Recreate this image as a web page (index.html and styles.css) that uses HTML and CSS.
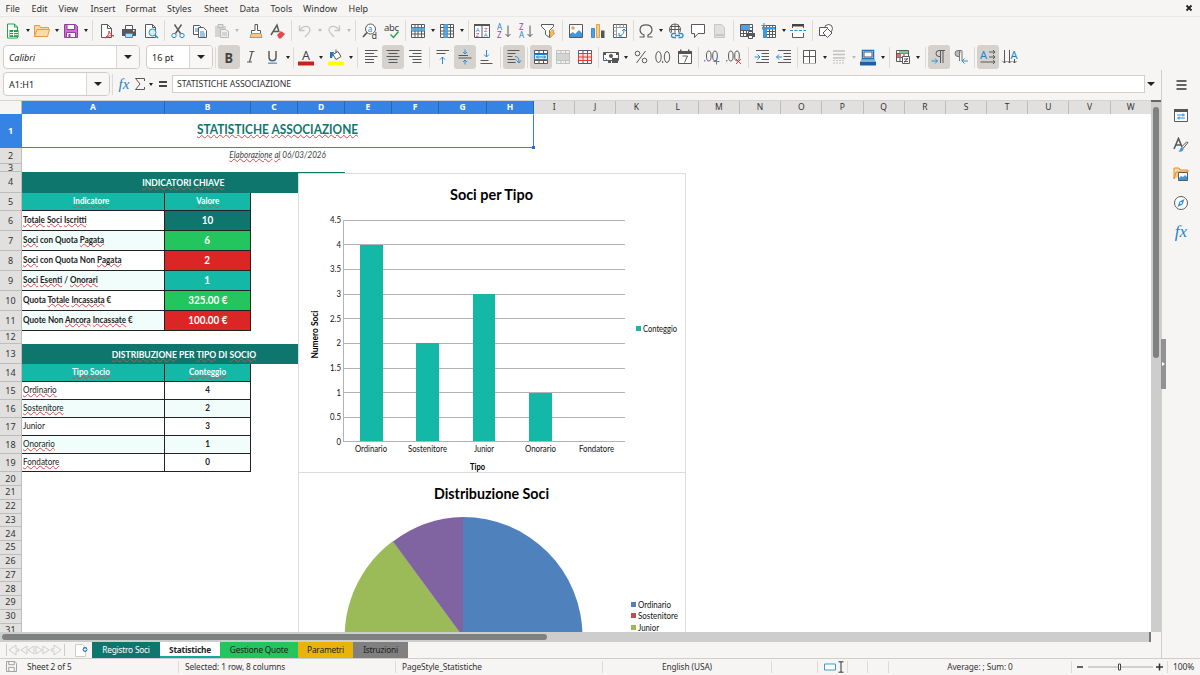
FILE: index.html
```html
<!DOCTYPE html>
<html lang="it">
<head>
    <meta charset="utf-8">
    <title>Statistiche Associazione</title>
    <link rel="stylesheet" href="styles.css">
</head>
<body>
<div class="app">
    <div class="menubar">
        <span class="m1">File</span><span class="m2">Edit</span><span class="m3">View</span><span class="m4">Insert</span><span class="m5">Format</span><span class="m6">Styles</span><span class="m7">Sheet</span><span class="m8">Data</span><span class="m9">Tools</span><span class="m10">Window</span><span class="m11">Help</span>
        <svg class="close" viewBox="0 0 8 8"><path d="M1.5 1.5l5 5M6.500 1.500l-5 5"/></svg>
    </div>

    <!-- standard toolbar -->
    <div class="toolbar standard">
        <span class="btn"><svg viewBox="0 0 16 16"><path class="green wf" d="M2.500 1h7l3 3v11h-10z"/><path class="green" d="M9.500 1v3h3"/><path fill="#27a04c" d="M4.500 7h9v7h-9z"/><path stroke="#fff" d="M5 9.500h8M5 11.700h8M8.500 7.500v6"/></svg></span><span class="dd"></span>
        <span class="btn"><svg viewBox="0 0 16 16"><path fill="#f9d9a5" stroke="#e79c3c" d="M.5 13.500V2.500h5l1 2h8v2"/><path fill="#fcdca6" stroke="#e79c3c" d="M.5 13.500l2.500-7h12.500l-2 7z"/></svg></span><span class="dd"></span>
        <span class="btn"><svg viewBox="0 0 16 16"><path fill="#cf6fd6" stroke="#8e3f9e" d="M1.500 1.500h11l2 2v11h-13z"/><path fill="#fff" stroke="#8e3f9e" d="M4 1.500h7.500v5H4zM3.500 9.500h9v5h-9z"/><path fill="#8e3f9e" d="M5.500 11h2v3h-2z"/></svg></span><span class="dd"></span>
        <span class="sep x"></span>
        <span class="btn"><svg viewBox="0 0 16 16"><path class="gray wf" d="M2.500 1.500h6l4 4v9h-10z"/><path class="gray" d="M8.500 1.500v4h4"/><path class="red" d="M6 15c3-2 4-4 4-7 1 3 2 4 5 5-3-1-6 0-9 2"/></svg></span>
        <span class="btn"><svg viewBox="0 0 16 16"><path fill="#fff" stroke="#555" d="M4.500 2.500h7v4h-7z"/><path fill="#54585c" d="M1 6h14v7H1z"/><path fill="#aee0fb" stroke="#2f8fd0" d="M4.500 10.500h7v4h-7z"/><path fill="#fff" d="M12 7h1.500v1.500H12z"/></svg></span>
        <span class="btn"><svg viewBox="0 0 16 16"><path class="gray wf" d="M2.500 1.500h7l3 3v10h-10z"/><path class="gray" d="M9.500 1.500v3h3"/><circle class="blue" cx="9.500" cy="9.500" r="3.500" fill="#d7edfb"/><path class="blue" stroke-width="1.500" d="M12 12l3 3"/></svg></span>
        <span class="sep"></span>
        <span class="btn"><svg viewBox="0 0 16 16"><path class="gray" stroke-width="1.400" d="M4.500 1.500l6 9M11.500 1.500l-6 9"/><circle class="blue" cx="4" cy="12.500" r="2.200"/><circle class="blue" cx="12" cy="12.500" r="2.200"/></svg></span>
        <span class="btn"><svg viewBox="0 0 16 16"><path class="gray wf" d="M1.500 2.500h6l2 2v7h-8z"/><path class="blue" d="M3 6h5M3 8h5"/><path class="gray wf" d="M6.500 4.500h5l3 3v7h-8z"/><path class="blue" d="M8 9h4M8 11h5M8 13h5"/></svg></span>
        <span class="btn off"><svg viewBox="0 0 16 16"><path fill="#ccc" d="M1 3h11v11H1z"/><path stroke="#aaa" fill="#ddd" d="M4 1.500h5v3H4z"/><path stroke="#aaa" fill="#eee" d="M6.500 6.500h5l3 2v6h-8zM8 10h5M8 12h5"/></svg></span><span class="dd off"></span>
        <span class="sep blank"></span>
        <span class="btn"><svg viewBox="0 0 16 16"><path class="gray wf" d="M7 1.500h2.500v6h3v3h-9v-3H7z"/><path fill="#f7c68a" stroke="#e38b2a" d="M3.500 10.500h9.500l1 4h-12z"/></svg></span>
        <span class="btn"><svg viewBox="0 0 16 16"><path class="gray" stroke-width="1.500" d="M1 12l6-10 2 7M4 8.500h5"/><path fill="#e9474c" d="M7 12l4-4 4 3-4 4.500H9z"/></svg></span>
        <span class="sep"></span>
        <span class="btn off"><svg viewBox="0 0 16 16"><path class="pale" d="M2.500 2.500v5h5M2.500 7.500C6 2 13 2 13 7c0 3-3 4-5 7"/></svg></span><span class="dd off"></span>
        <span class="btn off"><svg viewBox="0 0 16 16"><path class="pale" d="M13.500 2.500v5h-5M13.500 7.500C10 2 3 2 3 7c0 3 3 4 5 7"/></svg></span><span class="dd off"></span>
        <span class="sep x"></span>
        <span class="btn"><svg viewBox="0 0 16 16"><circle class="gray wf" cx="8.500" cy="6" r="5"/><path class="gray" stroke-width="1.700" d="M5 9.500L1 14"/><text x="5.800" y="8.500" font-size="8" fill="#1e84cc">a</text><text x="9.500" y="15.500" font-size="9" fill="#444">d</text></svg></span>
        <span class="btn"><svg viewBox="0 0 16 16"><text x="0" y="7.500" font-size="9.500" fill="#444" textLength="15">abc</text><path stroke="#27a04c" stroke-width="1.400" d="M6.500 11.500l3 3 5-6"/></svg></span>
        <span class="sep n"></span>
        <span class="btn"><svg viewBox="0 0 16 16"><path class="gray wf" d="M1.500 1.500h13v13h-13zM1.500 4.500h13M1.500 8h13M1.500 11h13M5 1.500v13M8 1.500v13M11.500 1.500v13"/><path fill="#4aa3e0" fill-opacity=".85" d="M1 4.500h14v3.500H1z"/></svg></span><span class="dd"></span>
        <span class="btn"><svg viewBox="0 0 16 16"><path class="gray wf" d="M1.500 1.500h13v13h-13zM1.500 4.500h13M1.500 8h13M1.500 11h13M5 1.500v13M8 1.500v13M11.500 1.500v13"/><path fill="#4aa3e0" fill-opacity=".85" d="M5 1h4v14H5z"/></svg></span><span class="dd"></span>
        <span class="sep w"></span>
        <span class="btn"><svg viewBox="0 0 16 16"><path class="gray wf" d="M.5 1.500h15v13H.5z"/><path fill="#555" d="M0 1h16v2H0zM7.500 3h1v12h-1z"/><text x="1.800" y="8.500" font-size="6" fill="#1e84cc">A</text><text x="1.800" y="14" font-size="6" fill="#a83bb8">Z</text><text x="10" y="8.500" font-size="6" fill="#a83bb8">Z</text><text x="9.800" y="14" font-size="6" fill="#1e84cc">A</text></svg></span>
        <span class="btn"><svg viewBox="0 0 16 16"><text x="1" y="6.500" font-size="8" fill="#1e84cc">A</text><text x="1" y="15" font-size="8" fill="#a83bb8">Z</text><path class="gray" d="M12 2.500v11M9.500 11l2.500 2.500 2.500-2.500"/></svg></span>
        <span class="btn"><svg viewBox="0 0 16 16"><text x="1" y="6.500" font-size="8" fill="#a83bb8">Z</text><text x="1" y="15" font-size="8" fill="#1e84cc">A</text><path class="gray" d="M12 2.500v11M9.500 11l2.500 2.500 2.500-2.500"/></svg></span>
        <span class="btn"><svg viewBox="0 0 16 16"><path class="gray wf" d="M1.500 1.500h12v2l-4 4v7l-4-3v-4l-4-4z"/><path fill="#f5bd62" stroke="#e38b2a" stroke-width=".7" d="M12 7l-3 4h2l-1 4 5-5h-2l1-3z"/></svg></span>
        <span class="sep w"></span>
        <span class="btn"><svg viewBox="0 0 16 16"><path class="gray wf" d="M1.500 1.500h13v13h-13z"/><circle cx="5" cy="5" r="1.700" fill="#f0a24a"/><path fill="#3f97dc" d="M2 14v-3l3-2 2 2 4-4 3 3v4z"/></svg></span>
        <span class="btn"><svg viewBox="0 0 16 16"><path fill="#4aa3e0" stroke="#1e6fae" stroke-width=".7" d="M1.500 5.500h3v9h-3z"/><path fill="#f9cf90" stroke="#e38b2a" stroke-width=".8" d="M6.500 1.500h3v13h-3z"/><path fill="#555" d="M11 7.500h3.500V15H11z"/></svg></span>
        <span class="btn"><svg viewBox="0 0 16 16"><path class="gray wf" d="M1.500 1.500h13v13h-13z"/><path stroke="#999" d="M1.500 4.500h13M4.500 1.500v13M8 1.500v3M11.500 1.500v3M1.500 8h3M1.500 11.500h3"/><path class="blue" d="M7 10v3h3M7 13c4-1 5-3 5-6M10 8l2-2 2 2"/></svg></span>
        <span class="sep n"></span>
        <span class="btn"><svg viewBox="0 0 16 16"><path class="gray" stroke-width="1.200" d="M1.500 14h4.500v-2C0 9 1 1.800 8 1.800s8 7.200 2 10.200v2h4.500"/></svg></span><span class="dd w"></span>
        <span class="btn"><svg viewBox="0 0 16 16"><circle class="gray wf" cx="7" cy="6.500" r="5.500"/><path class="gray" d="M1.500 6.500h11M7 1v11M2.500 3.500h9M4 1.500c-1 3-1 7 0 10M10 1.500c1 3 1 7 0 10"/><path fill="#f6f5f4" d="M2.500 9.500H16V16H2.500z"/><path class="blue" stroke-width="1.300" d="M8 10.500H5.500a2 2 0 000 4H8M10.500 10.500H13a2 2 0 010 4h-2.500M7 12.500h5"/></svg></span>
        <span class="btn"><svg viewBox="0 0 16 16"><path class="gray wf" d="M1.500 1.500h13v9H8l-3.500 4v-4h-3z"/></svg></span>
        <span class="btn off"><svg viewBox="0 0 16 16"><path fill="#dcdcdc" stroke="#bbb" d="M2.500 1.500h7l3 3v10h-10z"/><path fill="#bbb" d="M3.500 11h8v2h-8z"/></svg></span>
        <span class="sep"></span>
        <span class="btn"><svg viewBox="0 0 16 16"><path class="gray wf" d="M1.500 1.500h12v12h-12zM1.500 4.500h12M1.500 7.500h12M1.500 10.500h12M4.500 1.500v12M7.500 1.500v12M10.500 1.500v12"/><path fill="#4aa3e0" d="M2 2h9v5H2z"/><path fill="#54585c" d="M7 10h9v4H7z"/><path fill="#fff" stroke="#555" d="M9.500 8.500h4v2h-4zM9.500 12.500h4v3h-4z"/></svg></span>
        <span class="btn"><svg viewBox="0 0 16 16"><path class="gray wf" d="M2.500 2.500h12v12h-12zM2.500 5.500h12M2.500 8.500h12M2.500 11.500h12M5.500 2.500v12M8.500 2.500v12M11.500 2.500v12"/><path fill="#3f97dc" d="M1 4h13v2.500H6V15H2V6.500H1z"/><path class="blue" d="M3 0v5M.5 2.500h5"/></svg></span><span class="dd"></span>
        <span class="btn"><svg viewBox="0 0 16 16"><path class="gray wf" d="M2.500 5V1.500h11V5M2.500 10v4.500h11V10"/><path fill="#444" d="M2 1h12v2.500H2z"/><path class="blue" stroke-dasharray="3 1.500" d="M0 7.500h16"/></svg></span>
        <span class="sep w"></span>
        <span class="btn"><svg viewBox="0 0 16 16"><circle class="gray wf" cx="10.500" cy="5.500" r="4"/><path class="gray wf" d="M1.500 4.500h8v8h-8z"/><path class="gray wf" d="M9.500 5.500l4.500 4.500-4.500 4.500L5 10z"/></svg></span>
    </div>

    <!-- formatting toolbar -->
    <div class="toolbar formatting">
        <span class="combo font"><i>Calibri</i><b></b></span>
        <span class="combo size"><span>16 pt</span><b></b></span>
        <span class="sep"></span>
        <span class="btn on"><svg viewBox="0 0 16 16"><text x="3.500" y="13.500" font-size="15" font-weight="700" fill="#444" textLength="8.500" lengthAdjust="spacingAndGlyphs">B</text></svg></span>
        <span class="btn"><svg viewBox="0 0 16 16"><path class="gray" stroke-width="1.200" d="M6.500 2.500h5M4 13h5M9.300 2.500L6.500 13"/></svg></span>
        <span class="btn"><svg viewBox="0 0 16 16"><path class="gray" stroke-width="1.500" d="M4 2v6c0 5 7 5 7 0V2"/><path stroke="#4aa3e0" stroke-width="1.400" d="M3 14.200h9"/></svg></span><span class="dd"></span>
        <span class="sep n"></span>
        <span class="btn"><svg viewBox="0 0 16 16"><text x="4" y="10.500" font-size="12.500" fill="#444">A</text><path fill="#c9211e" d="M0 12.500h16v4H0z"/></svg></span><span class="dd w"></span>
        <span class="btn"><svg viewBox="0 0 16 16"><path class="gray wf" d="M5 5.500l5-3 3 5-5 3zM8 4V.5"/><path fill="#2376b8" d="M2 3h4l-2 6H2z"/><path fill="#ff0" d="M0 12.500h16v4H0z"/></svg></span><span class="dd"></span>
        <span class="sep w"></span>
        <span class="btn"><svg viewBox="0 0 16 16"><path class="gray" d="M2 1.500h12.500M2 4.500h9M2 7.500h12.500M2 10.500h9M2 13.500h9"/></svg></span>
        <span class="btn on"><svg viewBox="0 0 16 16"><path class="gray" d="M1.500 1.500h13M3.500 4.500h9M1.500 7.500h13M3.500 10.500h9M3.500 13.500h9"/></svg></span>
        <span class="btn"><svg viewBox="0 0 16 16"><path class="gray" d="M2 1.500h12.500M5.500 4.500h9M2 7.500h12.500M5.500 10.500h9M5.500 13.500h9"/></svg></span>
        <span class="sep w"></span>
        <span class="btn"><svg viewBox="0 0 16 16"><path class="gray" d="M1.500 1.500h12.500M1.500 4.500h9"/><path class="blue" d="M7.500 15V8M5 10.500L7.500 8l2.500 2.500"/></svg></span>
        <span class="btn on"><svg viewBox="0 0 16 16"><path class="gray" d="M1.500 6.500h9.500M1.500 9h13"/><path class="blue" d="M8 .5v4.500M6 3l2 2 2-2M8 15.500V11M6 13l2-2 2 2"/></svg></span>
        <span class="btn"><svg viewBox="0 0 16 16"><path class="gray" d="M1.500 11.500h8M1.500 14.500h12"/><path class="blue" d="M7.500 1v7M5 5.500L7.500 8 10 5.500"/></svg></span>
        <span class="sep"></span>
        <span class="btn on"><svg viewBox="0 0 16 16"><path class="gray" d="M1.500 1.500h12M1.500 4.500h8M1.500 7.500h5M1.500 10.500h8M1.500 13.500h8"/><path class="blue" d="M9 7.500c3 0 4 2 4 6M10.500 11.500l2.500 2.500 2-2.500"/></svg></span>
        <span class="sep"></span>
        <span class="btn on"><svg viewBox="0 0 16 16"><path class="gray wf" d="M1.500 1.500h13v13h-13zM1.500 4.500h13M1.500 11.500h13M6 1.500v13M10.500 1.500v13"/><path fill="#d4edfc" stroke="#1e84cc" d="M1.500 5.500h13v5h-13zM3.500 8h9M5 6.500L3.500 8 5 9.500M11 6.500L12.500 8 11 9.500"/></svg></span>
        <span class="btn off"><svg viewBox="0 0 16 16"><path stroke="#b5b5b5" fill="#eee" d="M1.500 1.500h13v13h-13zM1.500 4.500h13M1.500 11.500h13M6 1.500v13M10.500 1.500v13"/><path fill="#ccc" d="M2 5h12v6H2z"/></svg></span>
        <span class="btn"><svg viewBox="0 0 16 16"><path class="gray wf" d="M1.500 1.500h13v13h-13zM6 1.500v13M10.500 1.500v13"/><path stroke="#e0393e" fill="#fde3e3" d="M1.500 4.500h13v7h-13zM6 4.500v7M10.500 4.500v7M1.500 8h13"/></svg></span>
        <span class="sep n"></span>
        <span class="btn"><svg viewBox="0 0 16 16"><path class="gray wf" d="M.5 3.500h15v8H.5z"/><circle cx="8" cy="7" r="2" fill="#555"/><path fill="#555" d="M1 4h2v2H1zM13 4h2v2h-2zM9 9h6v5H9zM5 11h3v3H5z"/><path class="blue" d="M2 9l3 3"/></svg></span><span class="dd w"></span>
        <span class="btn"><svg viewBox="0 0 16 16"><circle class="gray" cx="4.500" cy="4.500" r="2.300"/><circle class="gray" cx="11.500" cy="11.500" r="2.300"/><path class="gray" d="M12.500 2L3.500 14"/></svg></span>
        <span class="btn"><svg viewBox="0 0 16 16"><ellipse class="gray" cx="3.500" cy="8" rx="2.700" ry="5.500"/><ellipse class="gray" cx="12" cy="8" rx="2.700" ry="5.500"/><path class="gray" d="M7.700 12v2"/></svg></span>
        <span class="btn"><svg viewBox="0 0 16 16"><path class="gray wf" d="M1.500 2.500h13v12h-13z"/><path fill="#555" d="M1 2h14v3H1zM3 .5h1.500V3H3zM11 .5h1.500V3H11z"/><path class="gray" d="M5.500 7h5l-3 6.500"/></svg></span>
        <span class="sep"></span>
        <span class="btn"><svg viewBox="0 0 16 16"><ellipse class="gray" cx="4.800" cy="7" rx="2.300" ry="5"/><ellipse class="gray" cx="11" cy="7" rx="2.300" ry="5"/><path class="gray" d="M.8 11v1.500"/><path class="blue" d="M12.500 9.500v6M9.500 12.500h6"/></svg></span>
        <span class="btn"><svg viewBox="0 0 16 16"><ellipse class="gray" cx="4.800" cy="7" rx="2.300" ry="5"/><ellipse class="gray" cx="11" cy="7" rx="2.300" ry="5"/><path class="gray" d="M.8 11v1.500"/><path class="red" d="M10 10l5 5M15 10l-5 5"/></svg></span>
        <span class="sep w"></span>
        <span class="btn"><svg viewBox="0 0 16 16"><path class="gray" d="M2 1.500h13M7.500 4.500H15M7.500 7.500H15M7.500 10.500H15M2 13.500h13"/><path class="blue" d="M.5 8H6M3.500 5.500L6 8l-2.500 2.500"/></svg></span>
        <span class="btn"><svg viewBox="0 0 16 16"><path class="gray" d="M2 1.500h13M7.500 4.500H15M7.500 7.500H15M7.500 10.500H15M2 13.500h13"/><path class="blue" d="M.5 8H6M3 5.500L.5 8 3 10.500"/></svg></span>
        <span class="sep n"></span>
        <span class="btn"><svg viewBox="0 0 16 16"><path class="gray wf" d="M1.500 14V1.500h12V14M7.500 1.500V14M1.500 7.500h12"/><path stroke="#e8a860" d="M1 14.500h13"/></svg></span><span class="dd"></span>
        <span class="btn off"><svg viewBox="0 0 16 16"><path stroke="#b5b5b5" stroke-width="1.600" d="M2 2h12M2 5.500h12M2 9h12"/><path stroke="#b5b5b5" stroke-dasharray="2 1" d="M2 11.500h12M2 14h12"/></svg></span><span class="dd off"></span>
        <span class="btn"><svg viewBox="0 0 16 16"><path fill="#fff" stroke="#1e73b8" stroke-width="1.500" d="M2.500 1.500h11v8h-11z"/><path class="gray" d="M4 3h8v5H4z"/><path stroke="#1e73b8" d="M1 11h14"/><path fill="#1f5fa0" d="M0 12.500h16v4H0z"/></svg></span><span class="dd"></span>
        <span class="sep w"></span>
        <span class="btn"><svg viewBox="0 0 16 16"><path class="gray wf" d="M1.500 1.500h12v11h-12zM1.500 4.500h12M1.500 8.500h12M5 1.500v11M9 1.500v11"/><path fill="#7ecb90" d="M5 2h8v2.500H5z"/><path fill="#e86a6a" d="M2 5h4v3.500H2z"/><path class="gray wf" d="M7.500 7.500h7v7h-7zM9 10h4M9 12.500h4M12.500 9l-3 4.500"/></svg></span><span class="dd w"></span>
        <span class="sep w"></span>
        <span class="btn on"><svg viewBox="0 0 16 16"><path class="gray" d="M14 1.500H8a3 3 0 000 6h1M9.500 1.500V14M12 1.500V14"/><path class="blue" d="M.5 12h6M4 9.500L6.500 12 4 14.500"/></svg></span>
        <span class="btn"><svg viewBox="0 0 16 16"><path fill="#bbb" stroke="#777" d="M8.500 1.500H5a3 3 0 000 6h1M6.500 1.500V12M9 1.500V12"/><path class="blue" d="M15 12H9M11.500 9.500L9 12l2.500 2.500"/></svg></span>
        <span class="sep"></span>
        <span class="btn on"><svg viewBox="0 0 16 16"><text x="0" y="9.500" font-size="11" fill="#1e84cc">A</text><path class="gray" d="M9 3h6M9 8h6M.5 13h14M13 1l2 2-2 2M13 6l2 2-2 2M13 11l2 2-2 2"/></svg></span>
        <span class="btn"><svg viewBox="0 0 16 16"><text x="8.500" y="9.500" font-size="11" fill="#1e84cc">A</text><path class="gray" d="M2.500 1v13M7.500 1v13M12.500 10v4M.5 12l2 2 2-2M5.500 12l2 2 2-2M10.500 12l2 2 2-2"/></svg></span>
    </div>

    <div class="main">
        <div class="left">
            <div class="formulabar">
                <span class="combo name"><span>A1:H1</span><b></b></span>
                <span class="sep"></span>
                <span class="fx">fx</span>
                <svg class="sigma" viewBox="0 0 12 14"><path class="gray" d="M10.500 4V1.500h-9L6 7l-4.500 5.500h9V10"/></svg>
                <span class="dd w"></span>
                <svg class="equals" viewBox="0 0 12 14"><path stroke="#444" stroke-width="1.800" d="M2 5h8M2 9h8"/></svg>
                <span class="input">STATISTICHE ASSOCIAZIONE</span>
                <b class="expand"></b>
            </div>
            <div class="sheetarea">
                <div class="gridarea">
                    <div class="colheads">
                        <span class="corner"></span>
                        <span class="sel ca">A</span><span class="sel cb">B</span><span class="sel">C</span><span class="sel">D</span><span class="sel">E</span><span class="sel">F</span><span class="sel cg">G</span><span class="sel">H</span>
                        <span>I</span><span>J</span><span>K</span><span>L</span><span>M</span><span>N</span><span>O</span><span>P</span><span>Q</span><span>R</span><span>S</span><span>T</span><span>U</span><span>V</span><span>W</span>
                    </div>
                    <div class="body">
                        <div class="rowheads">
                            <span class="sel">1</span><span>2</span><span>3</span><span>4</span><span>5</span><span>6</span><span>7</span><span>8</span><span>9</span><span>10</span><span>11</span><span>12</span><span>13</span><span>14</span><span>15</span><span>16</span><span>17</span><span>18</span><span>19</span><span>20</span><span>21</span><span>22</span><span>23</span><span>24</span><span>25</span><span>26</span><span>27</span><span>28</span><span>29</span><span>30</span><span>31</span>
                        </div>
                        <div class="cells">
                            <div class="title"><em><u>STATISTICHE</u> <u>ASSOCIAZIONE</u></em></div>
                            <div class="subtitle"><em><u>Elaborazione</u> <u>al</u> 06/03/2026</em></div>
                            <div class="space"></div>
                            <div class="band"><em><u>INDICATORI</u> <u>CHIAVE</u></em></div>
                            <div class="row head"><span><em><u>Indicatore</u></em></span><span><em><u>Valore</u></em></span></div>
                            <div class="row kpi"><span><em><u>Totale</u> <u>Soci</u> <u>Iscritti</u></em></span><span class="dark"><em>10</em></span></div>
                            <div class="row kpi alt"><span><em><u>Soci</u> con Quota <u>Pagata</u></em></span><span class="ok"><em>6</em></span></div>
                            <div class="row kpi"><span><em><u>Soci</u> con Quota Non <u>Pagata</u></em></span><span class="ko"><em>2</em></span></div>
                            <div class="row kpi alt"><span><em><u>Soci</u> <u>Esenti</u> / <u>Onorari</u></em></span><span class="teal"><em>1</em></span></div>
                            <div class="row kpi"><span><em>Quota <u>Totale</u> <u>Incassata</u> €</em></span><span class="ok"><em>325.00 €</em></span></div>
                            <div class="row kpi alt"><span><em>Quote Non <u>Ancora</u> <u>Incassate</u> €</em></span><span class="ko"><em>100.00 €</em></span></div>
                            <div class="space"></div>
                            <div class="band"><em><u>DISTRIBUZIONE</u> PER <u>TIPO</u> DI <u>SOCIO</u></em></div>
                            <div class="row head"><span><em><u>Tipo Socio</u></em></span><span><em><u>Conteggio</u></em></span></div>
                            <div class="row"><span><em><u>Ordinario</u></em></span><span><em>4</em></span></div>
                            <div class="row alt"><span><em><u>Sostenitore</u></em></span><span><em>2</em></span></div>
                            <div class="row"><span><em>Junior</em></span><span><em>3</em></span></div>
                            <div class="row alt"><span><em><u>Onorario</u></em></span><span><em>1</em></span></div>
                            <div class="row"><span><em><u>Fondatore</u></em></span><span><em>0</em></span></div>
                        </div>

                        <div class="charts">
                            <svg class="chart" viewBox="0 0 388 300">
                                <path stroke="#dcdcdc" fill="#fff" d="M.5.5h387v299H.5z"/>
                                <text class="ctitle" x="152" y="27" textLength="83" lengthAdjust="spacingAndGlyphs">Soci per Tipo</text>
                                <path stroke="#b3b3b3" d="M45 47.500h282M45 71.500h282M45 96.500h282M45 121.500h282M45 145.500h282M45 170.500h282M45 195.500h282M45 219.500h282M45 244.500h282M45 268.500h282M45.500 47v222"/>
                                <path fill="#14b8a6" d="M62 72h23v196H62zM118 170h23v98h-23zM175 121h22v147h-22zM231 220h23v48h-23zM338 153h5v5h-5z"/>
                                <g class="lab" transform="translate(0 -.5)">
                                    <text x="32" y="50" textLength="11" lengthAdjust="spacingAndGlyphs">4.5</text><text x="38.500" y="75" textLength="4.500" lengthAdjust="spacingAndGlyphs">4</text><text x="32" y="99.500" textLength="11" lengthAdjust="spacingAndGlyphs">3.5</text><text x="38.500" y="124" textLength="4.500" lengthAdjust="spacingAndGlyphs">3</text><text x="32" y="149" textLength="11" lengthAdjust="spacingAndGlyphs">2.5</text><text x="38.500" y="173.500" textLength="4.500" lengthAdjust="spacingAndGlyphs">2</text><text x="32" y="198" textLength="11" lengthAdjust="spacingAndGlyphs">1.5</text><text x="38.500" y="223" textLength="4.500" lengthAdjust="spacingAndGlyphs">1</text><text x="32" y="247.500" textLength="11" lengthAdjust="spacingAndGlyphs">0.5</text><text x="38.500" y="272" textLength="4.500" lengthAdjust="spacingAndGlyphs">0</text>
                                </g>
                                <g class="lab">
                                    <text x="57" y="278.500" textLength="32" lengthAdjust="spacingAndGlyphs">Ordinario</text><text x="110" y="278.500" textLength="39" lengthAdjust="spacingAndGlyphs">Sostenitore</text><text x="176" y="278.500" textLength="20" lengthAdjust="spacingAndGlyphs">Junior</text><text x="227" y="278.500" textLength="31" lengthAdjust="spacingAndGlyphs">Onorario</text><text x="281" y="278.500" textLength="35" lengthAdjust="spacingAndGlyphs">Fondatore</text>
                                    <text x="345" y="158.500" textLength="34" lengthAdjust="spacingAndGlyphs">Conteggio</text>
                                </g>
                                <text class="axis" x="172" y="296.500" textLength="15" lengthAdjust="spacingAndGlyphs">Tipo</text>
                                <text class="axis" transform="translate(20 185.500) rotate(-90)" textLength="48" lengthAdjust="spacingAndGlyphs">Numero Soci</text>
                            </svg>
                            <svg class="chart" viewBox="0 0 388 300">
                                <path stroke="#dcdcdc" fill="#fff" d="M.5.5h387v299H.5z"/>
                                <text class="ctitle" x="136" y="27" textLength="115" lengthAdjust="spacingAndGlyphs">Distribuzione Soci</text>
                                <path fill="#9bbb59" d="M165 165L95 69A119.500 119.500 0 0 0 165 284.500z"/>
                                <path fill="#8064a2" d="M165 165L95 69.500A119.500 119.500 0 0 1 165 45z"/>
                                <path fill="#4f81bd" d="M165 45a119.500 119.500 0 0 1 0 239z"/>
                                <path fill="#4f81bd" d="M333 130h5v5h-5z"/>
                                <path fill="#c0504d" d="M333 141h5v5h-5z"/>
                                <path fill="#9bbb59" d="M333 153h5v5h-5z"/>
                                <g class="lab">
                                    <text x="340" y="135.500" textLength="33" lengthAdjust="spacingAndGlyphs">Ordinario</text><text x="340" y="147" textLength="40" lengthAdjust="spacingAndGlyphs">Sostenitore</text><text x="340" y="158.500" textLength="21" lengthAdjust="spacingAndGlyphs">Junior</text>
                                </g>
                            </svg>
                        </div>
                        <div class="cursor"></div>
                    </div>
                    <div class="hscroll"><span></span></div>
                </div>
                <div class="vscroll"><span></span></div>
            </div>
            <div class="tabs">
                <svg class="nav" viewBox="0 0 62 16"><path stroke="#cfcdca" d="M1.500 2v12M11 3L4 8l7 5V9h3V7h-3zM22 4l-6 4 6 4zM29 4l-6 4 6 4zM31 4l6 4-6 4zM38 4l6 4-6 4zM49 3l7 5-7 5V9h-3V7h3zM59.500 2v12"/></svg>
                <svg class="add" viewBox="0 0 16 16"><path fill="#fff" stroke="#ccc" d="M1.500 2.500h7l3 3v9h-10z"/><circle cx="11" cy="7.500" r="2.400" fill="#2f6fc0"/><path stroke="#fff" d="M9.500 7.500h3M11 6v3"/></svg>
                <span class="tab t1">Registro Soci</span><span class="tab t2">Statistiche</span><span class="tab t3">Gestione Quote</span><span class="tab t4">Parametri</span><span class="tab t5">Istruzioni</span>
            </div>
        </div>
        <div class="sidebar">
            <svg class="burger" viewBox="0 0 16 16"><path stroke="#333" stroke-width="1.500" d="M3.500 4h10M3.500 8h10M3.500 12h10"/></svg>
            <svg viewBox="0 0 16 16"><path class="gray wf" d="M1.500 1.500h13v12h-13z"/><path fill="#555" d="M1 1h14v3H1z"/><path class="blue" d="M4 7h8M4 10h8M10 5.500v3M6 8.500v3"/></svg>
            <svg viewBox="0 0 16 16"><path class="gray" stroke-width="1.600" d="M1 12L5.500 1.500 9 10M3 8h5"/><path class="gray wf" d="M15 5.500l-5 6-1.500-1.500 5-5z"/><path fill="#3f97dc" d="M5 14.500c2 0 2-4 4-4l1.500 1.500c0 2-2 3-5.500 2.500"/></svg>
            <svg viewBox="0 0 16 16"><path fill="#fbdcae" stroke="#e38b2a" d="M1 13V2h5l1 2h8v2"/><path fill="#f7c68a" stroke="#e38b2a" d="M1 13l2-7h12"/><path class="gray wf" d="M5.500 6.500h9v8h-9z"/><path fill="#3f97dc" d="M6 14v-2l2-2 2 1 2-2 2 2v3z"/></svg>
            <svg viewBox="0 0 16 16"><circle class="gray wf" cx="8" cy="8" r="6.500"/><path fill="#2f8fd8" d="M11.500 4L9.500 9.500 4.500 12l2-5.500z"/><circle cx="8" cy="8" r="1" fill="#fff"/></svg>
            <span class="fx">fx</span>
            <b class="handle"></b>
        </div>
    </div>

    <div class="status">
        <span class="s1"><svg viewBox="0 0 12 12"><path stroke="#999" d="M.5.5h9l2 2v9H.5zM3 .5v3.500h6V.5M3 11V7h6v4"/></svg>Sheet 2 of 5</span>
        <span class="s2">Selected: 1 row, 8 columns</span>
        <span class="s3">PageStyle_Statistiche</span>
        <span class="s4">English (USA)</span>
        <span class="s5"></span>
        <span class="s6"><svg viewBox="0 0 22 12"><path stroke="#3f97cc" fill="#fff" d="M1.500 3h11v6h-11z"/><path stroke="#333" d="M15.500.8h5M15.500 11.200h5M18 1v10"/></svg></span>
        <span class="s7"></span>
        <span class="s8"></span>
        <span class="s9">Average: ; Sum: 0</span>
        <span class="s10"><svg viewBox="0 0 90 12"><path stroke="#333" stroke-width="1.500" d="M2 6h6M81 6h7M84.500 2.500v7"/><path stroke="#aaa" d="M13 6h65"/><path fill="#fff" stroke="#444" d="M43.500 3h2v6h-2z"/></svg></span>
        <span class="s11">100%</span>
    </div>
</div>
</body>
</html>
```

FILE: styles.css
```css
* {
    box-sizing: border-box;
}
body {
    margin: 0;
    font-family: "Noto Sans", sans-serif;
    font-size: 8px;
    color: #333;
    background: #f6f5f4;
}
svg {
    display: block;
    fill: none;
}
svg text {
    font-family: "Noto Sans", sans-serif;
}
.gray { stroke: #58595b; }
.blue { stroke: #2a8fd6; }
.green { stroke: #27a04c; }
.red { stroke: #e0393e; }
.pale { stroke: #bdbbb8; stroke-width: 1.3; }
.wf { fill: #fff; }

.app {
    width: 1200px;
    height: 675px;
    display: flex;
    flex-direction: column;
    overflow: hidden;
}

/* menu */
.menubar {
    height: 17px;
    display: flex;
    align-items: center;
    padding-left: 5.500px;
    border-bottom: 1px solid #eae8e6;
    font-size: 9px;
}
.m1 { width: 26px; }
.m2 { width: 27px; }
.m3 { width: 32px; }
.m4 { width: 35px; }
.m5 { width: 41.500px; }
.m6 { width: 37px; }
.m7 { width: 35.500px; }
.m8 { width: 31px; }
.m9 { width: 32.500px; }
.m10 { width: 45.500px; }
.close {
    width: 8px;
    height: 8px;
    margin-left: auto;
    margin-right: 7px;
    stroke: #222;
    stroke-width: 1.8;
}

/* toolbars */
.toolbar {
    display: flex;
    align-items: center;
}
.standard {
    height: 27px;
    padding-left: 2px;
}
.formatting {
    height: 26px;
    padding-left: 3px;
}
.btn {
    width: 22px;
    height: 24px;
    display: flex;
    align-items: center;
    justify-content: center;
    flex: none;
    border-radius: 3px;
}
.btn svg {
    width: 16px;
    height: 16px;
    overflow: visible;
}
.btn.on {
    background: #d5d2ce;
}
.btn.off {
    opacity: .8;
}
.dd {
    width: 7px;
    flex: none;
    display: flex;
    justify-content: center;
}
.dd.w { width: 8px; }
.dd::after, .combo b::after, .expand::after {
    content: "";
    border: 2px solid transparent;
    border-top: 3px solid #222;
    border-bottom: 0;
}
.dd.off::after {
    border-top-color: #bbb;
}
.combo b::after, .expand::after {
    border-width: 4px 4px 0;
}
.sep {
    width: 5px;
    height: 21px;
    flex: none;
    background: linear-gradient(#dddbd8, #dddbd8) center / 1px 100% no-repeat;
}
.sep.n { width: 4px; }
.sep.w { width: 6px; }
.sep.x { width: 7px; }
.sep.blank { background: none; }

.combo {
    display: flex;
    height: 24px;
    border: 1px solid #cfccc9;
    border-radius: 4px;
    background: #fff;
    align-items: center;
    overflow: hidden;
    flex: none;
    font-size: 9px;
    color: #222;
}
.combo > :first-child {
    flex: 1;
    padding-left: 5px;
}
.combo b {
    width: 23px;
    height: 100%;
    background: #f8f7f6;
    border-left: 1px solid #dad7d4;
    display: flex;
    align-items: center;
    justify-content: center;
}
.font { width: 137px; margin-right: 6px; }
.size { width: 67px; }
.name { width: 107px; }

/* work area */
.main {
    height: 588px;
    display: flex;
}
.left {
    width: 1162px;
    border-right: 1px solid #d0cecb;
}
.formulabar {
    height: 30px;
    padding: 0 4px 2px 3px;
    display: flex;
    align-items: center;
}
.fx {
    font: italic 15px "Liberation Serif", serif;
    color: #2383cc;
}
.formulabar .fx {
    width: 18px;
    text-align: center;
}
.sigma { width: 12px; height: 14px; margin: 0 1px; }
.equals { width: 12px; height: 14px; margin: 0 3px 0 2px; }
.input {
    flex: 1;
    height: 18px;
    border: 1px solid #d2cfcc;
    background: #fff;
    padding-left: 4px;
    line-height: 16px;
    font-size: 8.700px;
    letter-spacing: -.05px;
}
.expand {
    width: 12px;
    display: flex;
    justify-content: center;
}

.sheetarea {
    height: 542px;
    display: flex;
}
.gridarea {
    width: 1151px;
}
.colheads {
    height: 14px;
    display: flex;
    overflow: hidden;
    border-top: 1px solid #d5d3d1;
    font-size: 8.500px;
}
.colheads span {
    width: 41.200px;
    flex: none;
    background: #e2e0de;
    border-right: 1px solid #bfbdbb;
    text-align: center;
    line-height: 12px;
}
.colheads .corner {
    width: 22px;
    background: #f6f5f4;
}
.colheads .sel {
    width: 47px;
    background: #3584e4;
    border-color: #2468b8;
    color: #fff;
    font-weight: bold;
}
.colheads .ca { width: 143px; }
.colheads .cb { width: 86px; }
.colheads .cg { width: 48px; }

.body {
    height: 518px;
    display: flex;
    position: relative;
    overflow: hidden;
    background: #fff;
}
.rowheads {
    width: 22px;
    flex: none;
}
.rowheads, .cells {
    display: grid;
    align-content: start;
    grid-template-rows: 34px 16px 8px 21px 18px repeat(6, 20px) 13px 20px repeat(6, 18px) 14px repeat(11, 13.750px);
}
.rowheads span {
    background: #e2e0de;
    border-right: 1px solid #bfbdbb;
    border-bottom: 1px solid #bfbdbb;
    display: flex;
    align-items: center;
    justify-content: center;
    font-size: 9px;
    line-height: 10px;
}
.rowheads .sel {
    background: #3584e4;
    border-color: #3584e4;
    color: #fff;
    font-weight: bold;
}

.cells {
    width: 512px;
    flex: none;
    font-family: Lato, sans-serif;
    font-size: 9px;
    color: #222;
}
.cells u {
    text-decoration: underline wavy #d8484c .7px;
    text-underline-offset: 0;
    text-decoration-skip-ink: none;
}
/* condensed cell text */
.cells em {
    display: inline-block;
    font-style: inherit;
    white-space: nowrap;
    transform: scaleX(.9);
}
.title {
    text-align: center;
    font-size: 13.500px;
    font-weight: bold;
    line-height: 31px;
    color: #0f766e;
}
.cells .title em {
    transform: scaleX(.88);
}
.subtitle {
    text-align: center;
    font-style: italic;
    line-height: 14px;
    color: #444;
}
.band {
    width: 323px;
    background: #0f766e;
    color: #fff;
    font-weight: bold;
    display: flex;
    align-items: center;
    justify-content: center;
}
.cells .band em {
    transform: scaleX(.95);
}
.row {
    width: 229px;
    display: grid;
    grid-template-columns: 143px 86px;
}
.row span {
    border-right: 1px solid #222;
    border-bottom: 1px solid #222;
    line-height: 16px;
}
.row span:first-child em {
    transform-origin: left;
    margin-left: .5px;
}
.row span:last-child {
    text-align: center;
    font-weight: bold;
}
.row.alt span {
    background: #f0fdfa;
}
.row.head span {
    background: #14b8a6;
    color: #fff;
    text-align: center;
    font-weight: bold;
    line-height: 15px;
}
.row.head em {
    transform-origin: center;
}
.row.kpi span {
    font-weight: bold;
    line-height: 18px;
}
.row.kpi span:last-child {
    color: #fff;
    font-size: 11px;
}
.row.kpi .dark:last-child { background: #0f766e; }
.row.kpi .ok:last-child { background: #22c55e; }
.row.kpi .ko:last-child { background: #dc2626; }
.row.kpi .teal:last-child { background: #14b8a6; }

/* charts float over the cells */
.charts {
    position: absolute;
    left: 298px;
    top: 59px;
}
.chart {
    width: 388px;
    height: 300px;
    margin-bottom: -1px;
}
.chart text {
    font-family: Lato, sans-serif;
}
.ctitle {
    font-size: 15px;
    font-weight: bold;
    fill: #000;
}
.lab {
    font-size: 9px;
    fill: #111;
}
.axis {
    font-size: 8.500px;
    font-weight: bold;
    fill: #000;
}
.cursor {
    position: absolute;
    left: 21px;
    top: 0;
    width: 513px;
    height: 34px;
    border: 1px solid #3a7fd0;
    border-top-color: transparent;
}
.cursor::after {
    content: "";
    position: absolute;
    right: -2px;
    bottom: -2px;
    width: 3px;
    height: 3px;
    background: #2a6fc4;
}
.hscroll {
    height: 10px;
    background: #cdcdcd;
    padding: 2px;
    border-right: 2px solid #777;
}
.hscroll span {
    display: block;
    width: 545px;
    height: 6px;
    border-radius: 3px;
    background: #7f8080;
}
.vscroll {
    width: 10px;
    background: #cdcdcd;
    padding: 5px 2px 0;
    border-top: 2px solid #666;
    height: 532px;
}
.vscroll span {
    display: block;
    height: 251px;
    border-radius: 3px;
    background: #7f8080;
}

.tabs {
    height: 16px;
    display: flex;
    font-size: 8.300px;
    letter-spacing: -.2px;
    color: #222;
}
.nav { width: 62px; height: 16px; margin-left: 5px; }
.add { width: 16px; height: 16px; margin: 0 2px 0 7px; }
.tab {
    text-align: center;
    line-height: 15px;
}
.t1 { width: 68px; background: #0f766e; color: #fff; }
.t2 { width: 60px; background: #fff; font-weight: bold; border-bottom: 2px solid #14a898; }
.t3 { width: 78px; background: #22c55e; }
.t4 { width: 55px; background: #eab308; }
.t5 { width: 55px; background: #808080; }

.sidebar {
    width: 38px;
    display: flex;
    flex-direction: column;
    align-items: center;
    padding-top: 6.500px;
    gap: 13px;
    position: relative;
}
.sidebar svg {
    width: 16px;
    height: 16px;
}
.sidebar .burger {
    margin-bottom: 2px;
}
.sidebar .fx {
    font-size: 17px;
    line-height: 16px;
}
.handle {
    position: absolute;
    left: -1px;
    top: 269px;
    width: 5px;
    height: 50px;
    background: #929292;
}
.handle::after {
    content: "";
    display: block;
    margin: 23px 0 0 1px;
    border: 2px solid transparent;
    border-left: 3px solid #fff;
    border-right: 0;
}

/* status bar */
.status {
    height: 17px;
    display: flex;
    align-items: center;
    border-top: 1px solid #d0cecb;
    font-size: 8.300px;
    letter-spacing: -.1px;
}
.status > span {
    height: 12px;
    line-height: 12px;
    border-right: 1px solid #dddbd8;
    padding-left: 6px;
    white-space: nowrap;
    flex: none;
}
.status .s1 { width: 179px; display: flex; gap: 10px; }
.s1 svg { width: 11px; height: 11px; }
.s2 { width: 217px; }
.s3 { width: 207px; }
.status .s4 { width: 169px; text-align: center; padding: 0; }
.s5 { width: 46px; }
.status .s6 { width: 30px; padding-left: 5px; }
.s6 svg { width: 22px; height: 12px; }
.s7 { width: 20px; }
.s8 { width: 21px; }
.status .s9 { width: 183px; text-align: center; padding: 0; }
.status .s10 { width: 96px; padding-left: 3px; }
.s10 svg { width: 90px; height: 12px; }
.status .s11 { border: 0; width: 32px; padding-left: 5px; font-size: 8.500px; }
```
